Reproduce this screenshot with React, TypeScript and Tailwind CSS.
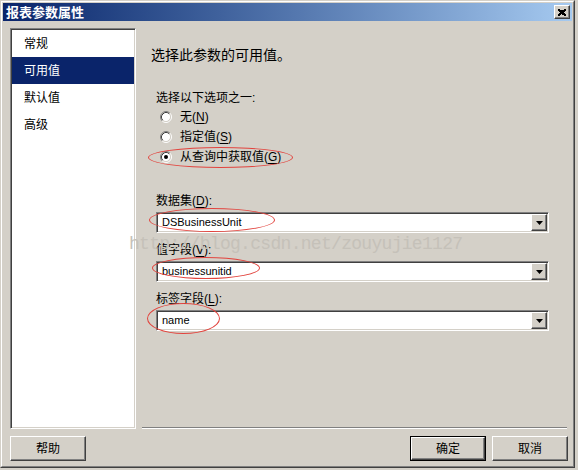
import React from "react";

const FONT = {
  fontFamily: '"Liberation Sans", "Noto Sans CJK SC", sans-serif',
};

const raised =
  "border border-t-white border-l-white border-r-[#404040] border-b-[#404040] shadow-[inset_-1px_-1px_0_#808080]";
const sunken =
  "border border-t-[#808080] border-l-[#808080] border-r-white border-b-white shadow-[inset_1px_1px_0_#404040,inset_-1px_-1px_0_#d4d0c8]";

const Radio = ({ checked }: { checked?: boolean }) => (
  <svg width="12" height="12" viewBox="0 0 12 12" className="shrink-0">
    <circle cx="6" cy="6" r="4.5" fill="white" />
    <path d="M2.11 9.89 A5.5 5.5 0 0 1 9.89 2.11" stroke="#808080" fill="none" />
    <path d="M9.89 2.11 A5.5 5.5 0 0 1 2.11 9.89" stroke="white" fill="none" />
    <path d="M2.82 9.18 A4.5 4.5 0 0 1 9.18 2.82" stroke="#404040" fill="none" />
    <path d="M9.18 2.82 A4.5 4.5 0 0 1 2.82 9.18" stroke="#d4d0c8" fill="none" />
    {checked && <circle cx="6" cy="6" r="2" fill="black" />}
  </svg>
);

const Label = ({ text, hot, tail = "" }: { text: string; hot: string; tail?: string }) => (
  <span>
    {text}(<span className="underline underline-offset-2">{hot}</span>){tail}
  </span>
);

const Combo = ({ value }: { value: string }) => (
  <div className={`w-[393px] h-[21px] bg-white flex items-center ${sunken} p-[1px]`}>
    <span className="flex-1 pl-[4px] text-[11px] text-black leading-none">{value}</span>
    <div className={`w-[16px] h-[17px] bg-[#d4d0c8] flex items-center justify-center ${raised}`}>
      <svg width="7" height="4" viewBox="0 0 7 4">
        <path d="M0 0 H7 L3.5 4 Z" fill="black" />
      </svg>
    </div>
  </div>
);

const Button = ({ label }: { label: string }) => (
  <div
    className={`w-full h-full bg-[#d4d0c8] flex items-center justify-center text-[12px] text-black ${raised}`}
  >
    {label}
  </div>
);

const Ellipse = ({ className }: { className: string }) => (
  <div
    className={`absolute rounded-[50%] border border-[#e2443e] pointer-events-none ${className}`}
  />
);

export default function App() {
  const pages = ["常规", "可用值", "默认值", "高级"];

  return (
    <div className="w-[578px] h-[470px] bg-[#d4d0c8] relative overflow-hidden" style={FONT}>
      <div className="w-[575px] h-[468px] border border-t-[#d4d0c8] border-l-[#d4d0c8] border-r-[#404040] border-b-[#404040]">
        <div className="h-full border border-t-white border-l-white border-r-[#808080] border-b-[#808080] p-px flex flex-col">
          {/* title bar */}
          <div className="h-[18px] bg-gradient-to-r from-[#0a246a] to-[#a6caf0] flex items-center justify-between pl-[3px] pr-[2px]">
            <span className="text-white text-[13px] font-bold leading-none">报表参数属性</span>
            <div className={`w-[16px] h-[14px] bg-[#d4d0c8] flex items-center justify-center ${raised}`}>
              <svg width="8" height="7" viewBox="0 0 8 7">
                <path d="M0 0 L8 7 M1 0 L8 6 M0 1 L7 7 M8 0 L0 7 M7 0 L0 6 M8 1 L1 7" stroke="black" strokeWidth="1" fill="none" shapeRendering="crispEdges" />
              </svg>
            </div>
          </div>

          {/* body */}
          <div className="flex-1 flex flex-col pl-[7px] pr-[4px]">
            <div className="mt-[7px] h-[401px] flex">
              <div className={`w-[126px] h-full bg-white ${sunken} py-px px-px`}>
                {pages.map((p, i) => (
                  <div
                    key={p}
                    className={`h-[27px] flex items-center pl-[12px] text-[12px] ${
                      i === 1 ? "bg-[#0a246a] text-white" : "text-black"
                    }`}
                  >
                    {p}
                  </div>
                ))}
              </div>

              <div className="ml-[6px] flex-1 flex flex-col text-black">
                <div className="mt-[17px] pl-[9px] text-[14px] leading-[20px]">选择此参数的可用值。</div>

                <div className="pl-[14px] flex flex-col text-[12px]">
                  <div className="mt-[25px] leading-[16px]">选择以下选项之一:</div>
                  <div className="mt-px flex flex-col pl-[4px]">
                    <div className="h-[20px] flex items-center gap-[8px]">
                      <Radio />
                      <Label text="无" hot="N" />
                    </div>
                    <div className="h-[20px] flex items-center gap-[8px]">
                      <Radio />
                      <Label text="指定值" hot="S" />
                    </div>
                    <div className="h-[20px] flex items-center gap-[8px]">
                      <Radio checked />
                      <Label text="从查询中获取值" hot="G" />
                    </div>
                  </div>

                  <div className="mt-[26px] leading-[16px]">
                    <Label text="数据集" hot="D" tail=":" />
                  </div>
                  <div className="mt-[3px]">
                    <Combo value="DSBusinessUnit" />
                  </div>

                  <div className="mt-[9px] leading-[16px]">
                    <Label text="值字段" hot="V" tail=":" />
                  </div>
                  <div className="mt-[3px]">
                    <Combo value="businessunitid" />
                  </div>

                  <div className="mt-[9px] leading-[16px]">
                    <Label text="标签字段" hot="L" tail=":" />
                  </div>
                  <div className="mt-[3px]">
                    <Combo value="name" />
                  </div>
                </div>

                <div className="mt-auto mr-px h-[2px] border-t border-t-[#808080] border-b border-b-white" />
              </div>
            </div>

            <div className="mt-[7px] h-[25px] flex">
              <div className="w-[76px] h-full">
                <Button label="帮助" />
              </div>
              <div className="ml-auto w-[76px] h-full border border-black">
                <Button label="确定" />
              </div>
              <div className="ml-[6px] w-[76px] h-full">
                <Button label="取消" />
              </div>
            </div>
          </div>
        </div>
      </div>

      {/* watermark */}
      <div
        className="absolute left-[129px] top-[234px] text-[18px] tracking-[-0.7px] leading-[20px] text-[#c5c1b9] pointer-events-none whitespace-nowrap"
        style={{ fontFamily: '"Liberation Mono", monospace' }}
      >
        http://blog.csdn.net/zouyujie1127
      </div>

      {/* red annotations */}
      <Ellipse className="left-[148px] top-[147px] w-[145px] h-[21px]" />
      <Ellipse className="left-[149px] top-[208px] w-[126px] h-[24px]" />
      <Ellipse className="left-[152px] top-[257px] w-[108px] h-[22px]" />
      <Ellipse className="left-[147px] top-[303px] w-[73px] h-[31px]" />
    </div>
  );
}
